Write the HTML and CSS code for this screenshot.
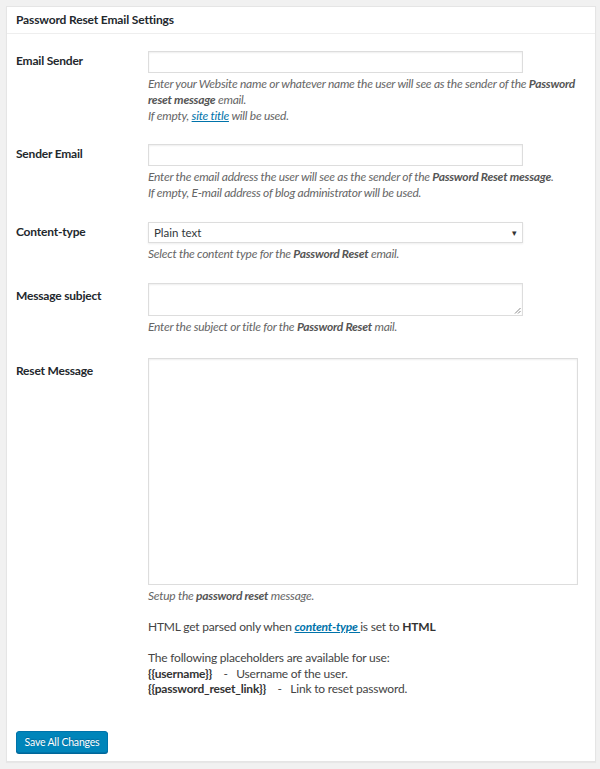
FILE: index.html
```html
<!DOCTYPE html>
<html>
<head>
<meta charset="utf-8">
<link rel="stylesheet" href="styles.css">
</head>
<body>
<div class="panel">
  <h2 class="panel-title">Password Reset Email Settings</h2>
  <div class="panel-body">
    <div class="row row-1">
      <div class="label">Email Sender</div>
      <div class="field">
        <input class="text-input" type="text">
        <p class="desc">Enter your Website name or whatever name the user will see as the sender of the <b>Password</b><br><b>reset message</b> email.<br>If empty, <a href="#" class="link">site title</a> will be used.</p>
      </div>
    </div>
    <div class="row row-2">
      <div class="label">Sender Email</div>
      <div class="field">
        <input class="text-input" type="text">
        <p class="desc">Enter the email address the user will see as the sender of the <b>Password Reset message</b>.<br>If empty, E-mail address of blog administrator will be used.</p>
      </div>
    </div>
    <div class="row row-3">
      <div class="label">Content-type</div>
      <div class="field">
        <div class="select"><span>Plain text</span><span class="caret">▾</span></div>
        <p class="desc">Select the content type for the <b>Password Reset</b> email.</p>
      </div>
    </div>
    <div class="row row-4">
      <div class="label label-tall">Message subject</div>
      <div class="field">
        <div class="textarea small"><svg class="grip" width="7" height="7" viewBox="0 0 7 7"><path d="M6.5 1 L1 6.5 M6.5 4 L4 6.5" stroke="#888" stroke-width="1"/></svg></div>
        <p class="desc">Enter the subject or title for the <b>Password Reset</b> mail.</p>
      </div>
    </div>
    <div class="row row-5">
      <div class="label label-tall">Reset Message</div>
      <div class="field">
        <div class="textarea big"></div>
        <p class="desc">Setup the <b>password reset</b> message.</p>
        <p class="note note-1">HTML get parsed only when <a href="#" class="link strong-link">content-type </a> is set to <b>HTML</b></p>
        <p class="note note-2">The following placeholders are available for use:<br><b>{{username}}</b> &nbsp; &nbsp;- &nbsp; Username of the user.<br><b>{{password_reset_link}}</b> &nbsp; &nbsp;- &nbsp; Link to reset password.</p>
      </div>
    </div>
    <div class="actions">
      <button class="btn-primary">Save All Changes</button>
    </div>
  </div>
</div>
</body>
</html>
```
FILE: styles.css
```css
html, body {
  margin: 0;
  padding: 0;
}
body {
  background: #f1f1f1;
  font-family: Lato, "Open Sans", sans-serif;
  font-size: 13px;
  color: #444;
  padding: 6px 4px 7px 6px;
}
.panel {
  background: #fff;
  border: 1px solid #e5e5e5;
  box-shadow: 0 1px 1px rgba(0,0,0,0.04);
  height: 756px;
  box-sizing: border-box;
}
.panel-title {
  margin: 0;
  font-size: 12px;
  font-weight: 700;
  letter-spacing: -0.15px;
  color: #23282d;
  line-height: 16px;
  padding: 5px 9px 5px 9px;
  border-bottom: 1px solid #eee;
}
.panel-body {
  padding: 0 9px;
}
.row {
  display: flex;
}
.label {
  width: 132px;
  flex: none;
  font-weight: 700;
  color: #23282d;
  font-size: 12px;
  letter-spacing: -0.2px;
  line-height: 18px;
  padding-top: 1px;
}
.label-tall { padding-top: 4px; }
.field {
  flex: 1;
}
.row-1 { padding-top: 17px; }
.row-2 { padding-top: 20px; }
.row-3 { padding-top: 21px; }
.row-4 { padding-top: 21px; }
.row-5 { padding-top: 23px; }
.text-input {
  display: block;
  width: 375px;
  height: 22px;
  box-sizing: border-box;
  border: 1px solid #ddd;
  box-shadow: inset 0 1px 2px rgba(0,0,0,0.07);
  margin: 0;
  padding: 2px 6px;
  font-family: inherit;
  font-size: 13px;
  background: #fff;
}
.select {
  width: 375px;
  height: 21px;
  box-sizing: border-box;
  border: 1px solid #ddd;
  box-shadow: 0 1px 2px rgba(0,0,0,0.07);
  display: flex;
  align-items: center;
  justify-content: space-between;
  padding: 0 5px 0 5px;
  color: #32373c;
  font-size: 11.5px;
}
.caret { font-size: 9px; color: #333; }
.textarea {
  border: 1px solid #ddd;
  box-shadow: inset 0 1px 2px rgba(0,0,0,0.07);
  box-sizing: border-box;
  position: relative;
}
.textarea.small { width: 375px; height: 33px; }
.textarea.big { width: 430px; height: 227px; }
.grip { position: absolute; right: 1px; bottom: 1px; }
.desc {
  margin: 3px 0 0;
  font-style: italic;
  font-size: 12px;
  letter-spacing: -0.25px;
  line-height: 16px;
  color: #666;
}
.desc b { color: #555; }
.note {
  margin: 15px 0 0;
  font-size: 12px;
  letter-spacing: -0.2px;
  line-height: 15.5px;
  color: #444;
}
.note-2 { margin-top: 15.5px; }
.note b { color: #333; }
.link { color: #0073aa; text-decoration: underline; }
.strong-link { font-weight: 700; font-style: italic; }
.actions {
  padding-top: 34.5px;
}
.btn-primary {
  display: block;
  width: 92px;
  height: 22px;
  padding: 0;
  background: #0085ba;
  border: 1px solid #0073aa;
  border-radius: 3px;
  box-shadow: 0 1px 0 #006799;
  color: #fff;
  font-family: inherit;
  font-size: 10.5px;
  letter-spacing: -0.2px;
  text-shadow: 0 -1px 1px #006799;
}
```
